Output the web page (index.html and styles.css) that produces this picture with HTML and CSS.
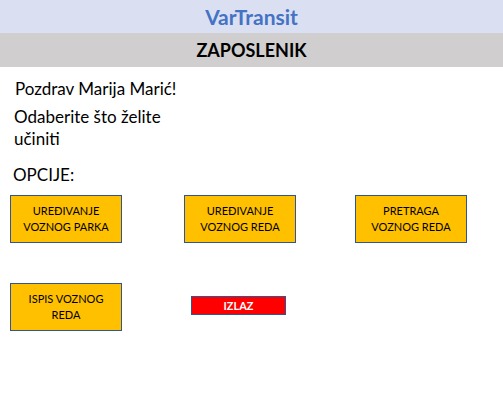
FILE: index.html
```html
<!DOCTYPE html>
<html lang="hr">
<head>
<meta charset="utf-8">
<link rel="stylesheet" href="styles.css">
</head>
<body>
<header class="brand">VarTransit</header>
<div class="role">ZAPOSLENIK</div>
<main class="content">
  <p class="greet">Pozdrav Marija Marić!</p>
  <p class="prompt">Odaberite što želite<br>učiniti</p>
  <p class="options">OPCIJE:</p>
  <div class="grid">
    <button class="btn">UREĐIVANJE<br>VOZNOG PARKA</button>
    <button class="btn">UREĐIVANJE<br>VOZNOG REDA</button>
    <button class="btn">PRETRAGA<br>VOZNOG REDA</button>
    <button class="btn">ISPIS VOZNOG<br>REDA</button>
    <div class="exit-cell"><button class="exit">IZLAZ</button></div>
  </div>
</main>
</body>
</html>
```
FILE: styles.css
```css
* { box-sizing: border-box; }
body {
  margin: 0;
  width: 503px;
  height: 405px;
  background: #fff;
  font-family: Lato, "Liberation Sans", sans-serif;
  color: #000;
}
.brand {
  height: 33px;
  background: #dae0f2;
  color: #4472c4;
  font-weight: bold;
  font-size: 21px;
  text-align: center;
  line-height: 33px;
}
.role {
  height: 34px;
  background: #d0cece;
  font-weight: bold;
  font-size: 18px;
  text-align: center;
  line-height: 34px;
}
.content { padding: 0 0 0 10px; }
.content p { margin: 0; font-size: 17px; }
.greet { padding: 11px 0 0 5px; line-height: 22px; }
.prompt { padding: 6px 0 0 4px; line-height: 22px; }
.options { padding: 14px 0 0 3px; line-height: 22px; }
.grid {
  margin-top: 9px;
  display: grid;
  grid-template-columns: 112px 112px 112px;
  column-gap: 62px;
  row-gap: 40px;
}
.grid .btn:nth-child(3) { margin-left: -3px; }
.btn {
  height: 48px;
  width: 112px;
  background: #ffc000;
  border: 1px solid #2f5597;
  font-family: inherit;
  font-size: 11px;
  line-height: 16px;
  color: #000;
  padding: 0;
}
.exit-cell { padding-top: 13px; }
.exit {
  display: block;
  margin-left: 7px;
  width: 95px;
  height: 19px;
  background: #ff0000;
  border: 1px solid #2f5597;
  color: #fff;
  font-family: inherit;
  font-weight: bold;
  font-size: 11px;
  line-height: 17px;
  padding: 0;
}
```
